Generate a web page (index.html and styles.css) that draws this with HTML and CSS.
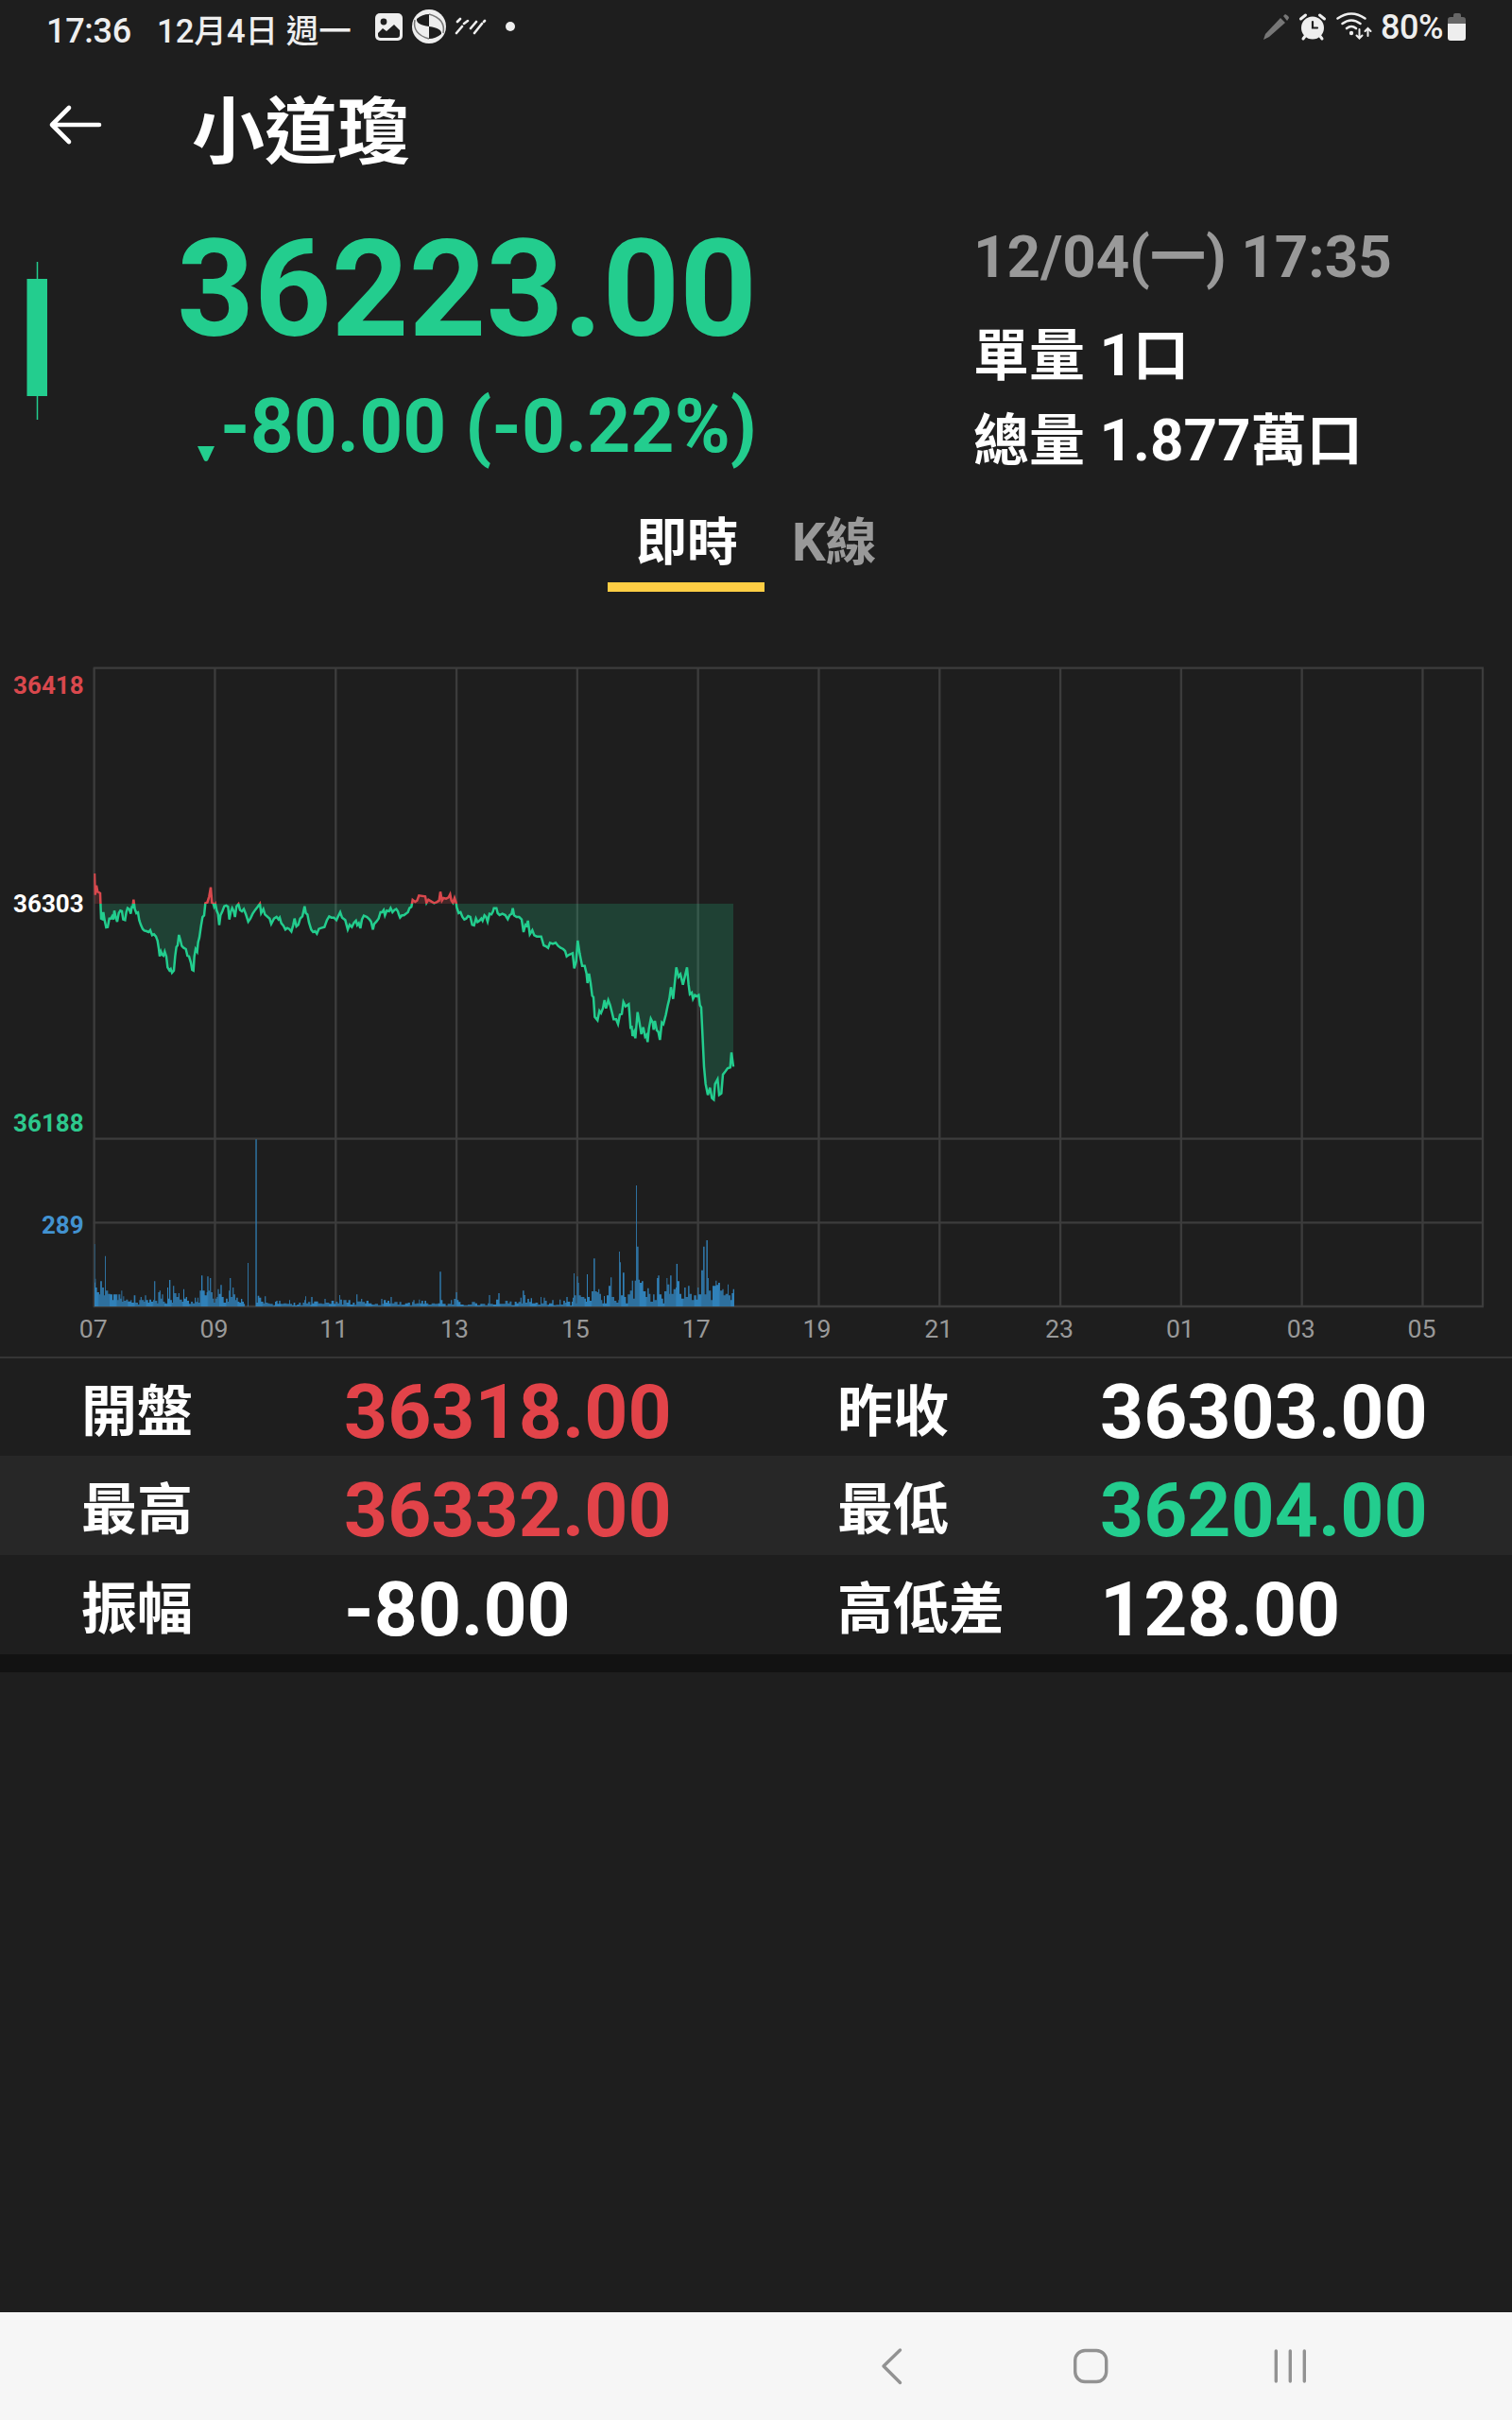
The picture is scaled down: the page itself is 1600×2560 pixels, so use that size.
FILE: index.html
```html
<!DOCTYPE html>
<html lang="zh-Hant">
<head>
  <meta charset="UTF-8" />
  <meta name="viewport" content="width=device-width, initial-scale=1.0" />
  <title>小道瓊</title>
  <link rel="stylesheet" href="styles.css">
</head>
<body>

<!-- Status bar -->
<div class="status-bar">
  <span class="clock">17:36</span>
  <span class="date">12月4日 週一</span>
  <svg class="status-left" width="160" height="60" viewBox="390 0 160 60">
    <rect x="397" y="14" width="29" height="29" rx="5" fill="#eee"/>
    <circle cx="406" cy="23" r="3.4" fill="#1e1e1e"/>
    <path d="M400 37v-2l5-5 4 3 8-7 6 6v5q0 3-3 3h-17q-3 0-3-3z" fill="#1e1e1e"/>
    <circle cx="454" cy="28" r="18" fill="#eee"/>
    <path d="M441 20q6-5 13-5v13q-14-2-13-8zM467 36q-6 5-13 5V28q14 2 13 8z" fill="#1e1e1e"/>
    <path d="M439 21q-3 15 15 20M469 35q3-15-15-20" fill="none" stroke="#777" stroke-width="1.5"/>
    <path d="M483 35l6-7M491 25l4-3M484 23l3-3M498 30l6-7M502 35l8-10M512 23l1-1" fill="none" stroke="#eee" stroke-width="2.6" stroke-linecap="round"/>
    <circle cx="540" cy="28" r="5" fill="#eee"/>
  </svg>
  <svg class="status-right" width="124" height="60" viewBox="1334 0 124 60">
    <path d="M1337 42l2-6 16-17 5 5-17 15z" fill="#777"/>
    <path d="M1358 17l2-2q4 2 4 4l-2 3z" fill="#777"/>
    <circle cx="1389" cy="29.500" r="12" fill="#eee"/>
    <path d="M1376.500 20l5-4M1401.500 20l-5-4M1379 41l3-4M1399 41l-3-4" stroke="#eee" stroke-width="3" stroke-linecap="round"/>
    <path d="M1389 23v6.500h5" fill="none" stroke="#1e1e1e" stroke-width="2.200" stroke-linecap="round"/>
    <path d="M1415.500 19.500q14.500-10 29 0M1420.500 25q9.500-7 19 0M1425 30q5-4 10 0" fill="none" stroke="#eee" stroke-width="2.600" stroke-linecap="round"/>
    <circle cx="1430" cy="35" r="2.200" fill="#eee"/>
    <path d="M1438.500 31v9M1435.500 37.500l3 3 3-3M1447.500 38v-8M1444.500 33l3-3 3 3" fill="none" stroke="#eee" stroke-width="2" stroke-linecap="round"/>
  </svg>
  <span class="battery-text">80%</span>
  <svg class="battery" width="20" height="30" viewBox="0 0 20 30">
    <path d="M0 11V7q0-3 3-3h3V2q0-2 2-2h4q2 0 2 2v2h2q3 0 3 3v4z" fill="#666"/>
    <path d="M0 11h19v15q0 3-3 3H3q-3 0-3-3z" fill="#eee"/>
  </svg>
</div>

<!-- Title -->
<header class="header">
  <svg class="back" width="60" height="46" viewBox="0 0 60 46">
    <path d="M54 23H5M22 5L4 23l18 18" fill="none" stroke="#fff" stroke-width="4.600" stroke-linecap="round" stroke-linejoin="round"/>
  </svg>
  <h1>小道瓊</h1>
</header>

<!-- Quote -->
<section class="quote">
  <svg class="candle" width="24" height="168" viewBox="0 0 24 168">
    <path d="M11.500 0v167" stroke="#23cd8e" stroke-width="1.500"/>
    <rect x="0.500" y="18" width="21.500" height="124" fill="#23cd8e"/>
  </svg>
  <div class="price-block down">
    <div class="price">36223.00</div>
    <div class="change">
      <svg width="20" height="18" viewBox="0 0 20 18"><path d="M1 1h18l-7 15q-2 2-4 0z" fill="#23cd8e"/></svg><span>-80.00 (-0.22%)</span>
    </div>
  </div>
  <div class="info">
    <div class="time">12/04(<i>一</i>) 17:35</div>
    <div class="single"><i>單量</i> 1<i>口</i></div>
    <div class="total"><i>總量</i> 1.877<i>萬口</i></div>
  </div>
</section>

<nav class="tabs">
  <a class="tab active"><i>即時</i></a>
  <a class="tab">K<i>線</i></a>
</nav>

<!-- Intraday chart, drawn by chart.js -->
<svg class="chart" id="chart" width="1600" height="740" viewBox="0 0 4800 2220">
  <defs>
    <clipPath id="above"><rect x="298" y="0" width="4500" height="798"/></clipPath>
    <clipPath id="below"><rect x="298" y="798" width="4500" height="1000"/></clipPath>
    <pattern id="stripes" width="58" height="10" patternUnits="userSpaceOnUse">
      <rect width="58" height="10" fill="#2e709e"/>
      <rect width="22" height="10" fill="#3081b9"/>
    </pattern>
  </defs>
  <g id="grid" class="grid-lines"></g>
  <g id="volume"></g>
  <g id="price"></g>
  <g class="y-labels">
    <text class="up" x="266" y="131">36418</text>
    <text class="flat" x="266" y="825">36303</text>
    <text class="down" x="266" y="1521">36188</text>
    <text class="vol" x="266" y="1845">289</text>
  </g>
  <g id="hours" class="x-labels"></g>
</svg>

<!-- Stats -->
<section class="stats">
  <div class="row">
    <span class="label">開盤</span><span class="value up">36318.00</span>
    <span class="label">昨收</span><span class="value">36303.00</span>
  </div>
  <div class="row alt">
    <span class="label">最高</span><span class="value up">36332.00</span>
    <span class="label">最低</span><span class="value down">36204.00</span>
  </div>
  <div class="row">
    <span class="label">振幅</span><span class="value">-80.00</span>
    <span class="label">高低差</span><span class="value">128.00</span>
  </div>
</section>

<!-- System navigation -->
<footer class="nav-bar">
  <svg width="460" height="40" viewBox="928 2483 460 40">
    <g fill="none" stroke="#929292" stroke-width="3.400" stroke-linecap="round" stroke-linejoin="round">
      <path d="M952.500 2486l-17.500 17 17.500 17.500"/>
      <rect x="1137.700" y="2486.500" width="33" height="33" rx="10.500"/>
      <path d="M1350.300 2487v32M1365.300 2487v32M1380.300 2487v32"/>
    </g>
  </svg>
</footer>

<script src="chart.js"></script>
</body>
</html>
```

FILE: styles.css
```css
body {
  margin: 0;
  height: 2560px;
  display: flex;
  flex-direction: column;
  background: #1e1e1e;
  color: #fff;
  font-family: Roboto, "Noto Sans CJK TC", sans-serif;
  font-weight: bold;
}
i {
  font-style: normal;
  line-height: 1;
}
svg {
  display: block;
  flex: none;
}
.up {
  color: #e24349;
  fill: #d9484d;
}
.down {
  color: #23cd8e;
  fill: #2dc88d;
}

/* status bar */
.status-bar {
  display: flex;
  height: 64px;
  line-height: 66px;
  padding-left: 49px;
  font-size: 36px;
  font-weight: 500;
  color: #eee;
  white-space: nowrap;
}
.clock {
  width: 117px;
  letter-spacing: -0.3px;
}
.date {
  width: 224px;
  font-size: 34.6px;
}
.status-right {
  margin-left: auto;
}
.battery-text {
  width: 71px;
  margin-left: 3px;
  line-height: 59px;
  letter-spacing: -0.5px;
}
.battery {
  margin: 14px 48px 0 0;
}

/* title */
.header {
  display: flex;
  height: 152px;
  padding-left: 51px;
}
.back {
  margin: 45px 92px 0 0;
}
.header h1 {
  margin: 0;
  font-size: 77px;
  line-height: 154px;
}

/* quote */
.quote {
  display: flex;
  height: 292px;
}
.candle {
  margin: 61px 0 0 28px;
}
.price-block {
  width: 749px;
  text-align: right;
}
.price {
  font-size: 142.5px;
  line-height: 181px;
}
.change {
  display: flex;
  justify-content: flex-end;
  font-size: 80.3px;
  line-height: 108px;
}
.change svg {
  margin: 74px 5px 0 0;
}
.info {
  margin-left: 229px;
  font-size: 62px;
  white-space: nowrap;
}
.info i {
  font-size: 59px;
}
.time {
  line-height: 112px;
  color: #999;
}
.single {
  line-height: 95px;
}
.total {
  line-height: 86px;
}

/* tabs */
.tabs {
  display: flex;
  height: 118px;
  padding-left: 643px;
}
.tab {
  padding: 24px 30px 0;
  line-height: 84px;
  font-size: 56px;
  color: #999;
  white-space: nowrap;
  border-bottom: 10px solid transparent;
}
.tab i {
  font-size: 54px;
}
.tab.active {
  width: 106px;
  color: #fff;
  border-color: #ffce44;
}
.tab + .tab {
  padding-left: 29px;
}

/* chart */
.chart {
  margin-top: 64px;
}
.grid-lines {
  stroke: #3c3c3c;
  stroke-width: 7;
}
.y-labels {
  font-size: 78px;
  text-anchor: end;
}
.y-labels .flat {
  fill: #fff;
}
.y-labels .vol {
  fill: #4292d0;
}
.x-labels {
  font-size: 80px;
  font-weight: normal;
  text-anchor: middle;
  fill: #999;
}

/* stats */
.stats {
  margin-top: 5px;
  border-top: 2px solid #353535;
  border-bottom: 19px solid #121212;
}
.row {
  display: grid;
  grid-template-columns: 278px 522px 278px 436px;
  height: 94px;
  padding: 11px 0 0 86px;
  line-height: 93px;
}
.row:first-child {
  height: 93px;
  padding-top: 10px;
}
.alt {
  background: #272727;
}
.label {
  font-size: 59px;
}
.value {
  font-size: 80.5px;
}

/* system navigation */
.nav-bar {
  height: 76px;
  margin-top: auto;
  padding: 38px 0 0 928px;
  background: #f6f6f6;
}
.nav-bar svg {
  margin-top: -1px;
}
```

FILE: chart.js
```js
const NS = "http://www.w3.org/2000/svg";
const BASE = 798;      // y of the previous close
const FLOOR = 2076;    // bottom of the volume pane
const LEFT = 299;
const RIGHT = 4707;
const STEP = 383.4;    // two hours

function add(parent, tag, attrs, text) {
  const el = document.createElementNS(NS, tag);
  for (const key in attrs) el.setAttribute(key, attrs[key]);
  if (text) el.textContent = text;
  document.getElementById(parent).appendChild(el);
}

// grid and hours
["07", "09", "11", "13", "15", "17", "19", "21", "23", "01", "03", "05"].forEach((hour, i) => {
  const x = LEFT + i * STEP;
  add("grid", "path", { d: `M${x} 50V${FLOOR}` });
  add("hours", "text", { x: x - (hour[0] === "1" ? 6 : 3), y: 2176 }, hour);
});
add("grid", "path", { d: `M${RIGHT} 50V${FLOOR}` });
[50, 1544, 1810, FLOOR].forEach(y => add("grid", "path", { d: `M${LEFT - 3} ${y}H${RIGHT + 3}` }));

// price, morning session: x,y
const early = `300,702 302,770 306,740 310,760 314,762 318,765 321,845 325,847 328,825 332,850 337,873 342,872 347,845
352,845 356,838 360,848 363,820 367,840 372,855 377,828 382,820 387,822 391,848 397,850 401,825 405,812 410,815 415,830
419,805 421,812 424,785 428,815 433,828 438,826 442,850 447,865 453,878 458,883 465,885 472,888 477,882 483,898 489,895
495,902 500,915 504,940 507,965 511,950 515,960 519,963 523,950 528,965 532,1000 538,1010 542,1005 546,1017 552,1010
556,965 560,935 564,930 568,897 573,915 577,932 583,938 590,942 595,963 600,965 606,985 610,1008 614,1010 617,965
621,942 626,950 629,920 633,905 638,870 643,840 648,835 652,796 658,794 664,775 669,746 673,795 677,797 680,808 684,800
688,820 692,830 696,866 700,835 706,822 712,806 718,804 724,808 728,848 733,822 737,812 742,822 746,840 751,806 757,799
762,818 768,822 774,815 780,830 788,855 795,845 802,830 810,818 818,808 825,798 829,828 836,815 841,832 850,840 856,845
861,862 870,845 878,840 884,848 888,842 893,860 900,868 906,880 912,875 918,878 925,886 931,865 935,845 941,870 947,865
953,845 960,838 967,806 971,828 976,832 981,858 988,880 994,888 1000,885 1006,893 1012,878 1020,875 1030,872 1038,850
1045,838 1052,842 1060,842 1068,850 1075,835 1080,825 1086,842 1096,850 1104,880 1110,865 1117,872 1124,858 1130,852
1134,866 1139,860 1144,876 1149,848 1155,836 1165,840 1173,848 1178,855 1184,880 1188,862 1195,855 1202,845 1208,825
1213,825 1218,818 1222,835 1228,820 1235,822 1240,812 1246,825 1252,818 1258,815`;

// rest of the day, offset by 1200,630
const late = `63,192 66,202 70,212 76,205 82,205 88,200 95,195 100,182 106,178 110,156 118,162 124,158 130,142 150,145
154,165 160,155 168,160 178,166 186,163 194,158 198,130 203,158 208,150 216,152 224,148 229,138 233,158 238,165 243,150
248,165 250,180 256,198 262,195 268,210 274,218 280,215 286,207 293,210 299,235 305,237 311,215 316,226 322,222 328,215
332,222 338,205 343,210 348,225 354,200 360,202 365,193 368,182 376,182 380,198 386,204 395,200 404,204 412,217 418,204
424,200 428,182 432,205 440,210 448,210 456,218 462,258 468,235 472,238 476,222 482,265 490,252 496,268 504,272 518,272
526,300 533,303 540,308 546,292 555,295 564,292 572,302 580,308 588,312 594,318 599,335 606,330 618,325 623,373 629,352
634,285 640,325 648,365 656,365 662,390 665,420 670,390 675,420 680,460 684,465 688,527 697,538 703,508 708,515 714,500
719,474 724,500 731,474 737,490 742,510 748,535 756,535 762,550 768,520 774,518 779,480 786,494 796,487 798,510 802,565
805,555 808,588 813,575 817,595 824,512 830,545 836,582 842,560 848,590 852,585 856,607 860,565 866,533 872,545 875,568
879,540 885,570 890,575 895,600 901,545 906,550 914,520 920,490 925,470 930,433 937,470 941,430 947,370 954,400 960,392
968,425 974,400 981,370 986,425 990,455 996,450 1000,470 1006,458 1012,462 1018,458 1022,490 1026,497 1030,580 1035,685
1040,740 1047,775 1054,752 1060,785 1066,790 1070,740 1078,725 1083,775 1090,770 1095,710 1103,700 1110,690 1118,688
1122,640 1128,685`;

const read = s => s.trim().split(/\s+/).map(p => p.split(/[,:]/).map(Number));
const line = read(early).concat(read(late).map(([x, y]) => [x + 1200, y + 630]));
const points = line.map(p => p.join(",")).join(" ");
const end = line[line.length - 1][0];

[["above", "#d9484d"], ["below", "#23cd8e"]].forEach(([clip, color]) => {
  const area = `300,${BASE} ${points} ${end},${BASE}`;
  add("price", "polygon", { points: area, fill: color, "fill-opacity": 0.2, "clip-path": `url(#${clip})` });
  add("price", "polyline", { points, fill: "none", stroke: color, "stroke-width": 7.5, "clip-path": `url(#${clip})` });
});

// volume, x:height, each step runs to the next x
const volumeEarly = `300:88 304:60 308:45 315:38 318:80 324:60 330:35 333:160 336:50 343:40 350:38 357:20 360:38 373:20
376:38 382:25 385:50 388:15 391:32 394:18 400:22 406:16 415:20 418:12 425:35 430:12 438:6 442:20 446:30 450:20 457:15
460:35 464:20 470:12 474:22 480:15 486:20 489:80 493:18 499:10 502:45 506:50 510:25 514:38 518:15 523:10 529:8 531:60
534:25 537:84 541:20 546:12 549:65 553:42 560:30 566:42 570:22 578:15 582:55 585:25 590:30 594:18 600:8 606:15 612:10
618:28 622:14 627:28 630:12 634:50 639:98 643:50 650:35 656:45 658:95 662:50 666:90 670:45 675:25 679:12 683:25 688:30
691:55 695:40 700:68 704:30 710:12 717:25 723:15 726:50 729:90 733:30 738:60 742:38 747:20 750:28 755:15 760:12 765:24
769:15 774:8 777:0 786:138 789:0 811:530 815:12 818:34 823:28 829:15 836:10 840:32 844:12 850:10 856:8 866:4 873:15
877:18 881:8 886:18 890:8 900:10 910:8 918:20 921:8 927:4 932:12 937:3 943:6 949:12 955:4 961:12 966:20 969:32 972:10
978:14 985:5 988:30 992:10 997:16 1010:10 1022:8 1030:24 1034:12 1045:8 1052:18 1060:8 1066:15 1072:10 1077:36 1080:22
1086:6 1090:20 1100:12 1106:20 1112:6 1120:12 1126:5 1131:38 1135:16 1146:24 1150:14 1158:10 1163:18 1170:10 1180:6 1190:8`;

const volumeLate = `0:4 10:24 14:8 18:20 25:12 30:18 36:10 40:30 44:10 52:14 62:6 68:14 74:5 86:10 95:12 102:4 108:14
112:20 116:8 122:10 130:22 133:10 138:18 143:8 148:18 153:10 160:6 170:10 180:8 190:10 196:110 200:20 205:8 215:2 221:8
231:20 235:6 241:24 247:45 251:20 256:14 262:6 272:4 285:6 298:14 308:10 315:4 325:8 340:4 348:10 352:36 356:8 365:6
375:22 382:42 386:8 404:18 412:10 418:16 424:4 434:15 440:10 446:14 452:28 456:10 459:50 464:36 468:12 474:24 480:14
485:26 489:10 500:12 508:6 516:30 519:10 526:28 530:18 536:5 543:10 553:20 557:4 565:5 576:22 580:6 588:18 594:12 598:30
602:15 610:3 615:15 618:28 621:105 624:35 629:10 631:95 635:75 638:35 644:30 655:25 660:15 663:102 666:30 672:18 678:48
684:152 689:48 695:45 699:55 703:40 708:20 712:10 717:33 720:10 726:35 732:65 738:92 742:30 750:18 757:12 763:20 765:174
768:140 771:35 777:107 782:30 787:10 793:38 800:50 806:82 810:25 815:82 819:384 822:190 827:85 831:75 837:80 842:48
850:30 855:58 860:40 865:15 873:38 878:20 885:90 889:98 893:38 900:25 905:10 909:48 916:90 919:70 925:40 927:98 932:40
938:55 945:60 947:135 951:80 957:40 963:25 972:60 977:30 984:65 989:40 996:20 1003:35 1010:22 1015:60 1018:38 1026:115
1032:190 1037:38 1042:210 1047:90 1050:50 1057:20 1062:65 1072:82 1075:68 1080:75 1086:50 1093:55 1097:35 1103:40
1110:70 1113:35 1119:20 1123:42 1127:55 1131:0`;

const bars = read(volumeEarly).concat(read(volumeLate).map(([x, h]) => [x + 1200, h]));
let d = `M300 ${FLOOR}`;
bars.forEach(([x, h]) => { d += `H${x}V${FLOOR - h}`; });
add("volume", "path", { d: d + `V${FLOOR}Z`, fill: "url(#stripes)" });
add("volume", "path", { d: "M301 1878V2000", stroke: "#2b5878", "stroke-width": 3 });
```
